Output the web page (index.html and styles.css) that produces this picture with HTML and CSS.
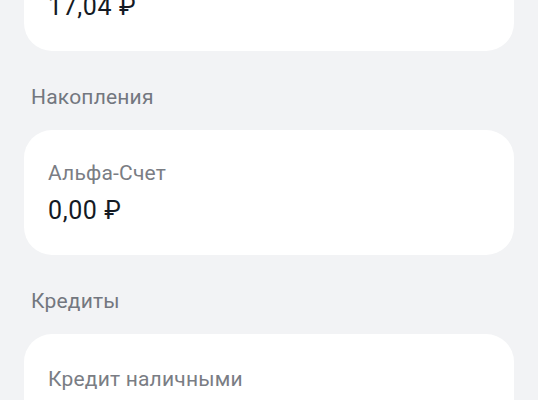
FILE: index.html
```html
<!DOCTYPE html>
<html lang="ru">
<head>
<meta charset="utf-8">
<title>Счета</title>
<link rel="stylesheet" href="styles.css">
</head>
<body>
<main class="screen">
  <section class="group">
    <div class="card">
      <div class="card-amount">17,04 ₽</div>
    </div>
  </section>
  <section class="group">
    <h2 class="group-title">Накопления</h2>
    <div class="card">
      <div class="card-label">Альфа-Счет</div>
      <div class="card-amount">0,00 ₽</div>
    </div>
  </section>
  <section class="group">
    <h2 class="group-title">Кредиты</h2>
    <div class="card">
      <div class="card-label">Кредит наличными</div>
      <div class="card-amount">0,00 ₽</div>
    </div>
  </section>
</main>
</body>
</html>
```

FILE: styles.css
```css
html, body {
  margin: 0;
  padding: 0;
  background: #f2f3f5;
  overflow: hidden;
}

body {
  font-family: Roboto, "Noto Sans", "Liberation Sans", sans-serif;
  -webkit-font-smoothing: antialiased;
}

.screen {
  display: flex;
  flex-direction: column;
  padding: 0 24px;
  margin-top: -39px;
}

.group {
  display: flex;
  flex-direction: column;
}

.group-title {
  margin: 34px 0 21px 7px;
  font-size: 21px;
  line-height: 24px;
  font-weight: 400;
  color: #73777f;
  letter-spacing: 0.2px;
}

.card {
  background: #ffffff;
  border-radius: 28px;
  padding: 31px 24px 29px;
  display: flex;
  flex-direction: column;
  gap: 11px;
}

.group + .group + .group .card {
  padding-top: 33px;
}

.card-label {
  font-size: 21px;
  line-height: 24px;
  color: #7a7d84;
  letter-spacing: 0.2px;
}

.card-amount {
  font-size: 25px;
  line-height: 30px;
  color: #141a24;
  letter-spacing: 0.6px;
}
```
